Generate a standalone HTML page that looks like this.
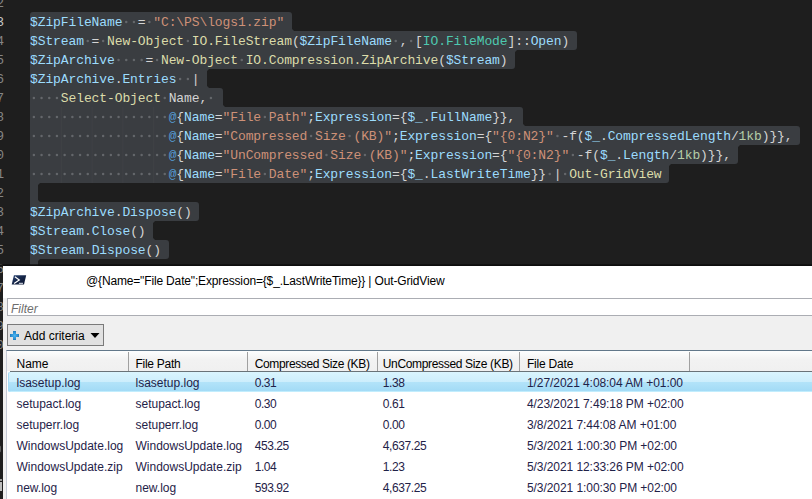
<!DOCTYPE html>
<html><head><meta charset="utf-8"><style>
html,body{margin:0;padding:0;}
body{width:812px;height:499px;overflow:hidden;background:#1e1e1e;position:relative;}
.num{position:absolute;right:808px;width:40px;text-align:right;height:19px;line-height:19px;font-family:"Liberation Mono",monospace;font-size:13px;letter-spacing:-0.1px;}
.cc{position:absolute;width:3px;height:3px;}
.dot{position:absolute;width:2.2px;height:2.2px;border-radius:1px;background:#606367;}
.sel{position:absolute;left:30px;height:19px;background:#3a3d41;}
.ln{position:absolute;left:30px;height:19px;line-height:19px;white-space:pre;font-family:"Liberation Mono",monospace;font-size:13px;letter-spacing:-0.1px;}
.ln i{font-style:normal;color:#6b6d70;}
#win{position:absolute;left:3px;top:266px;width:809px;height:233px;background:#f0f0f0;}
#shadow{position:absolute;left:0;top:264px;width:812px;height:2px;background:linear-gradient(rgba(12,12,12,0.55),#0c0c0c);}
#title{position:absolute;left:0;top:0;width:809px;height:32px;background:#fff;}
.wt{position:absolute;font-family:"Liberation Sans",sans-serif;font-size:12px;white-space:pre;color:#000;}
#filter{position:absolute;left:4px;top:32px;width:820px;height:16px;background:#fff;border:1px solid #abadb3;}
#btn{position:absolute;left:4px;top:58px;width:95px;height:20px;background:#e1e1e1;border:1px solid #7a7a7a;}
#grid{position:absolute;left:6px;top:350px;width:820px;height:160px;background:#fff;border:1px solid #c5cad6;border-top-color:#62788a;box-sizing:border-box;}
#hdr{position:absolute;left:7px;top:351px;width:820px;height:20px;background:linear-gradient(#fdfefe 0%,#f2f2f2 45%,#f0f0f0 100%);}
#hdrb{position:absolute;left:10px;top:371px;width:820px;height:1px;background:#6a7378;}
.sep{position:absolute;top:352px;width:1px;height:19px;background:#a0a0a0;}
.gt{position:absolute;font-family:"Liberation Sans",sans-serif;font-size:12px;white-space:pre;color:#1f2248;line-height:14px;}
.rsel{position:absolute;left:8px;width:830px;height:20px;border-radius:2px;background:linear-gradient(#daf5fe 0%,#cdeefc 48%,#b2e3f9 52%,#a3dbf6 94%,#c2edfd 95%,#c2edfd 100%);box-shadow:inset 1px 0 0 #a6dcf6;}
</style></head><body>
<div class="num" style="top:-6px;color:#858585">2</div>
<div class="num" style="top:13px;color:#c6c6c6">3</div>
<div class="num" style="top:32px;color:#858585">4</div>
<div class="num" style="top:51px;color:#858585">5</div>
<div class="num" style="top:70px;color:#858585">6</div>
<div class="num" style="top:89px;color:#858585">7</div>
<div class="num" style="top:108px;color:#858585">8</div>
<div class="num" style="top:127px;color:#858585">9</div>
<div class="num" style="top:146px;color:#858585">10</div>
<div class="num" style="top:165px;color:#858585">11</div>
<div class="num" style="top:184px;color:#858585">12</div>
<div class="num" style="top:203px;color:#858585">13</div>
<div class="num" style="top:222px;color:#858585">14</div>
<div class="num" style="top:241px;color:#858585">15</div>
<div class="num" style="top:260px;color:#858585">16</div>
<div class="num" style="top:279px;color:#858585">17</div>
<div class="num" style="top:298px;color:#858585">18</div>
<div class="num" style="top:317px;color:#858585">19</div>
<div class="num" style="top:336px;color:#858585">20</div>
<div class="sel" style="top:12px;width:261.8px;border-radius:3px 3px 0px 0px"></div>
<div class="sel" style="top:31px;width:546.7px;border-radius:0px 3px 3px 0px"></div>
<div class="sel" style="top:50px;width:485.1px;border-radius:0px 0px 3px 0px"></div>
<div class="sel" style="top:69px;width:177.1px;border-radius:0px 0px 0px 0px"></div>
<div class="sel" style="top:88px;width:192.5px;border-radius:0px 3px 0px 0px"></div>
<div class="sel" style="top:107px;width:492.8px;border-radius:0px 3px 0px 0px"></div>
<div class="sel" style="top:126px;width:770.0px;border-radius:0px 3px 3px 0px"></div>
<div class="sel" style="top:145px;width:708.4px;border-radius:0px 0px 3px 0px"></div>
<div class="sel" style="top:164px;width:639.1px;border-radius:0px 0px 3px 0px"></div>
<div class="sel" style="top:183px;width:7.7px;border-radius:0px 0px 0px 0px"></div>
<div class="sel" style="top:202px;width:169.4px;border-radius:0px 3px 3px 0px"></div>
<div class="sel" style="top:221px;width:123.2px;border-radius:0px 0px 0px 0px"></div>
<div class="sel" style="top:240px;width:138.6px;border-radius:0px 3px 3px 0px"></div>
<div class="sel" style="top:259px;width:7.7px;border-radius:0px 0px 3px 3px"></div>
<div class="cc" style="left:291.8px;top:28px;background:radial-gradient(circle at 100% 0%,#1e1e1e 2.6px,#3a3d41 3.2px)"></div>
<div class="cc" style="left:515.1px;top:50px;background:radial-gradient(circle at 100% 100%,#1e1e1e 2.6px,#3a3d41 3.2px)"></div>
<div class="cc" style="left:207.1px;top:69px;background:radial-gradient(circle at 100% 100%,#1e1e1e 2.6px,#3a3d41 3.2px)"></div>
<div class="cc" style="left:207.1px;top:85px;background:radial-gradient(circle at 100% 0%,#1e1e1e 2.6px,#3a3d41 3.2px)"></div>
<div class="cc" style="left:222.5px;top:104px;background:radial-gradient(circle at 100% 0%,#1e1e1e 2.6px,#3a3d41 3.2px)"></div>
<div class="cc" style="left:522.8px;top:123px;background:radial-gradient(circle at 100% 0%,#1e1e1e 2.6px,#3a3d41 3.2px)"></div>
<div class="cc" style="left:738.4px;top:145px;background:radial-gradient(circle at 100% 100%,#1e1e1e 2.6px,#3a3d41 3.2px)"></div>
<div class="cc" style="left:669.1px;top:164px;background:radial-gradient(circle at 100% 100%,#1e1e1e 2.6px,#3a3d41 3.2px)"></div>
<div class="cc" style="left:37.7px;top:183px;background:radial-gradient(circle at 100% 100%,#1e1e1e 2.6px,#3a3d41 3.2px)"></div>
<div class="cc" style="left:37.7px;top:199px;background:radial-gradient(circle at 100% 0%,#1e1e1e 2.6px,#3a3d41 3.2px)"></div>
<div class="cc" style="left:153.2px;top:221px;background:radial-gradient(circle at 100% 100%,#1e1e1e 2.6px,#3a3d41 3.2px)"></div>
<div class="cc" style="left:153.2px;top:237px;background:radial-gradient(circle at 100% 0%,#1e1e1e 2.6px,#3a3d41 3.2px)"></div>
<div class="cc" style="left:37.7px;top:259px;background:radial-gradient(circle at 100% 100%,#1e1e1e 2.6px,#3a3d41 3.2px)"></div>
<svg style="position:absolute;left:0;top:0" width="812" height="266"><rect x="60.80" y="107" width="1" height="19" fill="#404246"/><rect x="91.60" y="107" width="1" height="19" fill="#404246"/><rect x="122.40" y="107" width="1" height="19" fill="#404246"/><rect x="153.20" y="107" width="1" height="19" fill="#404246"/><rect x="60.80" y="126" width="1" height="19" fill="#404246"/><rect x="91.60" y="126" width="1" height="19" fill="#404246"/><rect x="122.40" y="126" width="1" height="19" fill="#404246"/><rect x="153.20" y="126" width="1" height="19" fill="#404246"/><rect x="60.80" y="145" width="1" height="19" fill="#404246"/><rect x="91.60" y="145" width="1" height="19" fill="#404246"/><rect x="122.40" y="145" width="1" height="19" fill="#404246"/><rect x="153.20" y="145" width="1" height="19" fill="#404246"/><rect x="60.80" y="164" width="1" height="19" fill="#404246"/><rect x="91.60" y="164" width="1" height="19" fill="#404246"/><rect x="122.40" y="164" width="1" height="19" fill="#404246"/><rect x="153.20" y="164" width="1" height="19" fill="#404246"/><circle cx="126.25" cy="22.10" r="1.25" fill="#64676b"/><circle cx="133.95" cy="22.10" r="1.25" fill="#64676b"/><circle cx="149.35" cy="22.10" r="1.25" fill="#64676b"/><circle cx="87.75" cy="41.10" r="1.25" fill="#64676b"/><circle cx="103.15" cy="41.10" r="1.25" fill="#64676b"/><circle cx="187.85" cy="41.10" r="1.25" fill="#64676b"/><circle cx="395.75" cy="41.10" r="1.25" fill="#64676b"/><circle cx="411.15" cy="41.10" r="1.25" fill="#64676b"/><circle cx="118.55" cy="60.10" r="1.25" fill="#64676b"/><circle cx="126.25" cy="60.10" r="1.25" fill="#64676b"/><circle cx="133.95" cy="60.10" r="1.25" fill="#64676b"/><circle cx="141.65" cy="60.10" r="1.25" fill="#64676b"/><circle cx="157.05" cy="60.10" r="1.25" fill="#64676b"/><circle cx="241.75" cy="60.10" r="1.25" fill="#64676b"/><circle cx="180.15" cy="79.10" r="1.25" fill="#64676b"/><circle cx="187.85" cy="79.10" r="1.25" fill="#64676b"/><circle cx="33.85" cy="98.10" r="1.25" fill="#64676b"/><circle cx="41.55" cy="98.10" r="1.25" fill="#64676b"/><circle cx="49.25" cy="98.10" r="1.25" fill="#64676b"/><circle cx="56.95" cy="98.10" r="1.25" fill="#64676b"/><circle cx="164.75" cy="98.10" r="1.25" fill="#64676b"/><circle cx="210.95" cy="98.10" r="1.25" fill="#64676b"/><circle cx="33.85" cy="117.10" r="1.25" fill="#64676b"/><circle cx="41.55" cy="117.10" r="1.25" fill="#64676b"/><circle cx="49.25" cy="117.10" r="1.25" fill="#64676b"/><circle cx="56.95" cy="117.10" r="1.25" fill="#64676b"/><circle cx="64.65" cy="117.10" r="1.25" fill="#64676b"/><circle cx="72.35" cy="117.10" r="1.25" fill="#64676b"/><circle cx="80.05" cy="117.10" r="1.25" fill="#64676b"/><circle cx="87.75" cy="117.10" r="1.25" fill="#64676b"/><circle cx="95.45" cy="117.10" r="1.25" fill="#64676b"/><circle cx="103.15" cy="117.10" r="1.25" fill="#64676b"/><circle cx="110.85" cy="117.10" r="1.25" fill="#64676b"/><circle cx="118.55" cy="117.10" r="1.25" fill="#64676b"/><circle cx="126.25" cy="117.10" r="1.25" fill="#64676b"/><circle cx="133.95" cy="117.10" r="1.25" fill="#64676b"/><circle cx="141.65" cy="117.10" r="1.25" fill="#64676b"/><circle cx="149.35" cy="117.10" r="1.25" fill="#64676b"/><circle cx="157.05" cy="117.10" r="1.25" fill="#64676b"/><circle cx="164.75" cy="117.10" r="1.25" fill="#64676b"/><circle cx="264.85" cy="117.10" r="1.25" fill="#64676b"/><circle cx="33.85" cy="136.10" r="1.25" fill="#64676b"/><circle cx="41.55" cy="136.10" r="1.25" fill="#64676b"/><circle cx="49.25" cy="136.10" r="1.25" fill="#64676b"/><circle cx="56.95" cy="136.10" r="1.25" fill="#64676b"/><circle cx="64.65" cy="136.10" r="1.25" fill="#64676b"/><circle cx="72.35" cy="136.10" r="1.25" fill="#64676b"/><circle cx="80.05" cy="136.10" r="1.25" fill="#64676b"/><circle cx="87.75" cy="136.10" r="1.25" fill="#64676b"/><circle cx="95.45" cy="136.10" r="1.25" fill="#64676b"/><circle cx="103.15" cy="136.10" r="1.25" fill="#64676b"/><circle cx="110.85" cy="136.10" r="1.25" fill="#64676b"/><circle cx="118.55" cy="136.10" r="1.25" fill="#64676b"/><circle cx="126.25" cy="136.10" r="1.25" fill="#64676b"/><circle cx="133.95" cy="136.10" r="1.25" fill="#64676b"/><circle cx="141.65" cy="136.10" r="1.25" fill="#64676b"/><circle cx="149.35" cy="136.10" r="1.25" fill="#64676b"/><circle cx="157.05" cy="136.10" r="1.25" fill="#64676b"/><circle cx="164.75" cy="136.10" r="1.25" fill="#64676b"/><circle cx="311.05" cy="136.10" r="1.25" fill="#64676b"/><circle cx="349.55" cy="136.10" r="1.25" fill="#64676b"/><circle cx="557.45" cy="136.10" r="1.25" fill="#64676b"/><circle cx="33.85" cy="155.10" r="1.25" fill="#64676b"/><circle cx="41.55" cy="155.10" r="1.25" fill="#64676b"/><circle cx="49.25" cy="155.10" r="1.25" fill="#64676b"/><circle cx="56.95" cy="155.10" r="1.25" fill="#64676b"/><circle cx="64.65" cy="155.10" r="1.25" fill="#64676b"/><circle cx="72.35" cy="155.10" r="1.25" fill="#64676b"/><circle cx="80.05" cy="155.10" r="1.25" fill="#64676b"/><circle cx="87.75" cy="155.10" r="1.25" fill="#64676b"/><circle cx="95.45" cy="155.10" r="1.25" fill="#64676b"/><circle cx="103.15" cy="155.10" r="1.25" fill="#64676b"/><circle cx="110.85" cy="155.10" r="1.25" fill="#64676b"/><circle cx="118.55" cy="155.10" r="1.25" fill="#64676b"/><circle cx="126.25" cy="155.10" r="1.25" fill="#64676b"/><circle cx="133.95" cy="155.10" r="1.25" fill="#64676b"/><circle cx="141.65" cy="155.10" r="1.25" fill="#64676b"/><circle cx="149.35" cy="155.10" r="1.25" fill="#64676b"/><circle cx="157.05" cy="155.10" r="1.25" fill="#64676b"/><circle cx="164.75" cy="155.10" r="1.25" fill="#64676b"/><circle cx="326.45" cy="155.10" r="1.25" fill="#64676b"/><circle cx="364.95" cy="155.10" r="1.25" fill="#64676b"/><circle cx="572.85" cy="155.10" r="1.25" fill="#64676b"/><circle cx="33.85" cy="174.10" r="1.25" fill="#64676b"/><circle cx="41.55" cy="174.10" r="1.25" fill="#64676b"/><circle cx="49.25" cy="174.10" r="1.25" fill="#64676b"/><circle cx="56.95" cy="174.10" r="1.25" fill="#64676b"/><circle cx="64.65" cy="174.10" r="1.25" fill="#64676b"/><circle cx="72.35" cy="174.10" r="1.25" fill="#64676b"/><circle cx="80.05" cy="174.10" r="1.25" fill="#64676b"/><circle cx="87.75" cy="174.10" r="1.25" fill="#64676b"/><circle cx="95.45" cy="174.10" r="1.25" fill="#64676b"/><circle cx="103.15" cy="174.10" r="1.25" fill="#64676b"/><circle cx="110.85" cy="174.10" r="1.25" fill="#64676b"/><circle cx="118.55" cy="174.10" r="1.25" fill="#64676b"/><circle cx="126.25" cy="174.10" r="1.25" fill="#64676b"/><circle cx="133.95" cy="174.10" r="1.25" fill="#64676b"/><circle cx="141.65" cy="174.10" r="1.25" fill="#64676b"/><circle cx="149.35" cy="174.10" r="1.25" fill="#64676b"/><circle cx="157.05" cy="174.10" r="1.25" fill="#64676b"/><circle cx="164.75" cy="174.10" r="1.25" fill="#64676b"/><circle cx="264.85" cy="174.10" r="1.25" fill="#64676b"/><circle cx="549.75" cy="174.10" r="1.25" fill="#64676b"/><circle cx="565.15" cy="174.10" r="1.25" fill="#64676b"/></svg>
<div class="ln" style="top:13px"><span style="color:#9cdcfe">$ZipFileName</span><span style="color:#d4d4d4">  = </span><span style="color:#ce9178">&quot;C:\PS\logs1.zip&quot;</span></div>
<div class="ln" style="top:32px"><span style="color:#9cdcfe">$Stream</span><span style="color:#d4d4d4"> = </span><span style="color:#dcdcaa">New-Object</span><span style="color:#d4d4d4"> </span><span style="color:#dcdcaa">IO.FileStream</span><span style="color:#d4d4d4">(</span><span style="color:#9cdcfe">$ZipFileName</span><span style="color:#d4d4d4"> , [</span><span style="color:#4ec9b0">IO.FileMode</span><span style="color:#d4d4d4">]::</span><span style="color:#9cdcfe">Open</span><span style="color:#d4d4d4">)</span></div>
<div class="ln" style="top:51px"><span style="color:#9cdcfe">$ZipArchive</span><span style="color:#d4d4d4">    = </span><span style="color:#dcdcaa">New-Object</span><span style="color:#d4d4d4"> </span><span style="color:#dcdcaa">IO.Compression.ZipArchive</span><span style="color:#d4d4d4">(</span><span style="color:#9cdcfe">$Stream</span><span style="color:#d4d4d4">)</span></div>
<div class="ln" style="top:70px"><span style="color:#9cdcfe">$ZipArchive</span><span style="color:#d4d4d4">.</span><span style="color:#9cdcfe">Entries</span><span style="color:#d4d4d4">  |</span></div>
<div class="ln" style="top:89px"><span style="color:#d4d4d4">    </span><span style="color:#dcdcaa">Select-Object</span><span style="color:#d4d4d4"> Name, </span></div>
<div class="ln" style="top:108px"><span style="color:#d4d4d4">                  </span><span style="color:#569cd6">@</span><span style="color:#d4d4d4">{</span><span style="color:#9cdcfe">Name</span><span style="color:#d4d4d4">=</span><span style="color:#ce9178">&quot;File Path&quot;</span><span style="color:#d4d4d4">;</span><span style="color:#9cdcfe">Expression</span><span style="color:#d4d4d4">={</span><span style="color:#9cdcfe">$_</span><span style="color:#d4d4d4">.</span><span style="color:#9cdcfe">FullName</span><span style="color:#d4d4d4">}},</span></div>
<div class="ln" style="top:127px"><span style="color:#d4d4d4">                  </span><span style="color:#569cd6">@</span><span style="color:#d4d4d4">{</span><span style="color:#9cdcfe">Name</span><span style="color:#d4d4d4">=</span><span style="color:#ce9178">&quot;Compressed Size (KB)&quot;</span><span style="color:#d4d4d4">;</span><span style="color:#9cdcfe">Expression</span><span style="color:#d4d4d4">={</span><span style="color:#ce9178">&quot;{0:N2}&quot;</span><span style="color:#d4d4d4"> -f(</span><span style="color:#9cdcfe">$_</span><span style="color:#d4d4d4">.</span><span style="color:#9cdcfe">CompressedLength</span><span style="color:#d4d4d4">/</span><span style="color:#b5cea8">1kb</span><span style="color:#d4d4d4">)}},</span></div>
<div class="ln" style="top:146px"><span style="color:#d4d4d4">                  </span><span style="color:#569cd6">@</span><span style="color:#d4d4d4">{</span><span style="color:#9cdcfe">Name</span><span style="color:#d4d4d4">=</span><span style="color:#ce9178">&quot;UnCompressed Size (KB)&quot;</span><span style="color:#d4d4d4">;</span><span style="color:#9cdcfe">Expression</span><span style="color:#d4d4d4">={</span><span style="color:#ce9178">&quot;{0:N2}&quot;</span><span style="color:#d4d4d4"> -f(</span><span style="color:#9cdcfe">$_</span><span style="color:#d4d4d4">.</span><span style="color:#9cdcfe">Length</span><span style="color:#d4d4d4">/</span><span style="color:#b5cea8">1kb</span><span style="color:#d4d4d4">)}},</span></div>
<div class="ln" style="top:165px"><span style="color:#d4d4d4">                  </span><span style="color:#569cd6">@</span><span style="color:#d4d4d4">{</span><span style="color:#9cdcfe">Name</span><span style="color:#d4d4d4">=</span><span style="color:#ce9178">&quot;File Date&quot;</span><span style="color:#d4d4d4">;</span><span style="color:#9cdcfe">Expression</span><span style="color:#d4d4d4">={</span><span style="color:#9cdcfe">$_</span><span style="color:#d4d4d4">.</span><span style="color:#9cdcfe">LastWriteTime</span><span style="color:#d4d4d4">}} | </span><span style="color:#dcdcaa">Out-GridView</span></div>
<div class="ln" style="top:184px"></div>
<div class="ln" style="top:203px"><span style="color:#9cdcfe">$ZipArchive</span><span style="color:#d4d4d4">.</span><span style="color:#9cdcfe">Dispose</span><span style="color:#d4d4d4">()</span></div>
<div class="ln" style="top:222px"><span style="color:#9cdcfe">$Stream</span><span style="color:#d4d4d4">.</span><span style="color:#9cdcfe">Close</span><span style="color:#d4d4d4">()</span></div>
<div class="ln" style="top:241px"><span style="color:#9cdcfe">$Stream</span><span style="color:#d4d4d4">.</span><span style="color:#9cdcfe">Dispose</span><span style="color:#d4d4d4">()</span></div>
<div class="ln" style="top:260px"></div>
<div id="shadow"></div>
<div style="position:absolute;left:-3px;top:445px;width:4px;height:8px;border:1.3px solid #5a5a5a;border-radius:3px;box-sizing:border-box"></div>
<div style="position:absolute;left:0;top:482px;width:2px;height:9px;background:#bdbdbd"></div><div style="position:absolute;left:0;top:479px;width:2px;height:1.5px;background:#9a9a9a"></div>
<div id="win">
<div id="title"></div>
<svg style="position:absolute;left:8px;top:9px" width="17" height="11" viewBox="0 0 17 11"><defs><linearGradient id="pg" x1="0" y1="0" x2="1" y2="1"><stop offset="0" stop-color="#2b4676"/><stop offset="0.5" stop-color="#142446"/><stop offset="1" stop-color="#0c1731"/></linearGradient></defs><path d="M2.9 0.2H15.2L13 9.6H0.7Z" fill="url(#pg)"/><path d="M3.9 1.7L8.3 4.9L3.1 8.5" stroke="#fff" stroke-width="1.2" fill="none"/><path d="M7.9 8.3H12" stroke="#e8ecf4" stroke-width="1"/></svg>
<div class="wt" style="left:83px;top:8px;font-size:12px;letter-spacing:-0.156px">@{Name="File Date";Expression={$_.LastWriteTime}} | Out-GridView</div>
<div id="filter"></div>
<div class="wt" style="left:8px;top:35.5px;font-style:italic;color:#6d6d6d">Filter</div>
<div id="btn"></div>
<svg style="position:absolute;left:7px;top:65px" width="9" height="9" viewBox="0 0 9 9"><defs><radialGradient id="pl" cx="0.5" cy="0.5" r="0.6"><stop offset="0" stop-color="#4bb5f0"/><stop offset="0.6" stop-color="#2b8fd3"/><stop offset="1" stop-color="#1a6aa8"/></radialGradient></defs><path d="M3 0H6V3H9V6H6V9H3V6H0V3H3Z" fill="url(#pl)"/></svg>
<div class="wt" style="left:21px;top:63px;color:#000">Add criteria</div>
<svg style="position:absolute;left:87px;top:66.5px" width="10" height="6" viewBox="0 0 10 6"><path d="M0.5 0H9.5L5 5Z" fill="#000"/></svg>
</div>
<div id="grid"></div>
<div id="hdr"></div><div id="hdrb"></div>
<div class="gt" style="left:16.5px;top:357px;color:#000;letter-spacing:0px">Name</div>
<div class="gt" style="left:135.5px;top:357px;color:#000;letter-spacing:-0.27px">File Path</div>
<div class="gt" style="left:254.7px;top:357px;color:#000;letter-spacing:-0.36px">Compressed Size (KB)</div>
<div class="gt" style="left:382.8px;top:357px;color:#000;letter-spacing:-0.34px">UnCompressed Size (KB)</div>
<div class="gt" style="left:527.0px;top:357px;color:#000;letter-spacing:-0.21px">File Date</div>
<div class="sep" style="left:128px"></div>
<div class="sep" style="left:247px"></div>
<div class="sep" style="left:377px"></div>
<div class="sep" style="left:519px"></div>
<div class="sep" style="left:689px"></div>
<div class="rsel" style="top:372px"></div>
<div class="gt" style="left:16.5px;top:376px;letter-spacing:0px">lsasetup.log</div>
<div class="gt" style="left:135.5px;top:376px;letter-spacing:0px">lsasetup.log</div>
<div class="gt" style="left:254.7px;top:376px;letter-spacing:-0.42px">0.31</div>
<div class="gt" style="left:382.8px;top:376px;letter-spacing:-0.42px">1.38</div>
<div class="gt" style="left:527.0px;top:376px;letter-spacing:-0.07px">1/27/2021 4:08:04 AM +01:00</div>
<div class="gt" style="left:16.5px;top:397px;letter-spacing:0px">setupact.log</div>
<div class="gt" style="left:135.5px;top:397px;letter-spacing:0px">setupact.log</div>
<div class="gt" style="left:254.7px;top:397px;letter-spacing:-0.42px">0.30</div>
<div class="gt" style="left:382.8px;top:397px;letter-spacing:-0.42px">0.61</div>
<div class="gt" style="left:527.0px;top:397px;letter-spacing:-0.07px">4/23/2021 7:49:18 PM +02:00</div>
<div class="gt" style="left:16.5px;top:418px;letter-spacing:0px">setuperr.log</div>
<div class="gt" style="left:135.5px;top:418px;letter-spacing:0px">setuperr.log</div>
<div class="gt" style="left:254.7px;top:418px;letter-spacing:-0.42px">0.00</div>
<div class="gt" style="left:382.8px;top:418px;letter-spacing:-0.42px">0.00</div>
<div class="gt" style="left:527.0px;top:418px;letter-spacing:-0.07px">3/8/2021 7:44:08 AM +01:00</div>
<div class="gt" style="left:16.5px;top:439px;letter-spacing:0px">WindowsUpdate.log</div>
<div class="gt" style="left:135.5px;top:439px;letter-spacing:0px">WindowsUpdate.log</div>
<div class="gt" style="left:254.7px;top:439px;letter-spacing:-0.42px">453.25</div>
<div class="gt" style="left:382.8px;top:439px;letter-spacing:-0.42px">4,637.25</div>
<div class="gt" style="left:527.0px;top:439px;letter-spacing:-0.07px">5/3/2021 1:00:30 PM +02:00</div>
<div class="gt" style="left:16.5px;top:460px;letter-spacing:0px">WindowsUpdate.zip</div>
<div class="gt" style="left:135.5px;top:460px;letter-spacing:0px">WindowsUpdate.zip</div>
<div class="gt" style="left:254.7px;top:460px;letter-spacing:-0.42px">1.04</div>
<div class="gt" style="left:382.8px;top:460px;letter-spacing:-0.42px">1.23</div>
<div class="gt" style="left:527.0px;top:460px;letter-spacing:-0.07px">5/3/2021 12:33:26 PM +02:00</div>
<div class="gt" style="left:16.5px;top:481px;letter-spacing:0px">new.log</div>
<div class="gt" style="left:135.5px;top:481px;letter-spacing:0px">new.log</div>
<div class="gt" style="left:254.7px;top:481px;letter-spacing:-0.42px">593.92</div>
<div class="gt" style="left:382.8px;top:481px;letter-spacing:-0.42px">4,637.25</div>
<div class="gt" style="left:527.0px;top:481px;letter-spacing:-0.07px">5/3/2021 1:00:30 PM +02:00</div>
</body></html>
